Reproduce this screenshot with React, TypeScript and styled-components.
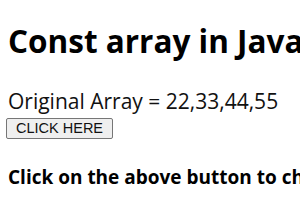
import styled, { createGlobalStyle } from 'styled-components';

const GlobalStyle = createGlobalStyle`
body {
    margin: 0;
    background: #fff;
    overflow: hidden;
}
`;

const Page = styled.div`
padding: 0 8px;
font-family: "Segoe UI", "Open Sans", "Noto Sans", sans-serif;
color: #000;
white-space: nowrap;
`;

const Title = styled.h1`
font-size: 31.5px;
font-weight: 700;
line-height: 40px;
margin: 21px 0 27px;
`;

const Result = styled.div`
font-size: 21px;
line-height: 26px;
color: #111;
`;

const Button = styled.button`
display: block;
height: 21px;
font-family: "Liberation Sans", Arial, sans-serif;
font-size: 14.5px;
line-height: 17px;
padding: 0 9px;
margin: 4px 0 0 -2px;
background: #efefef;
border: 1px solid #767676;
border-radius: 2px;
color: #111;
`;

const Note = styled.p`
font-size: 19px;
font-weight: 700;
margin: 25px 0 0;
`;

const App = () => {
    return (
        <Page>
            <GlobalStyle />
            <Title>Const array in JavaScript</Title>
            <Result>Original Array = 22,33,44,55</Result>
            <Button>CLICK HERE</Button>
            <Note>Click on the above button to change the array</Note>
        </Page>
    );
}

export default App;
